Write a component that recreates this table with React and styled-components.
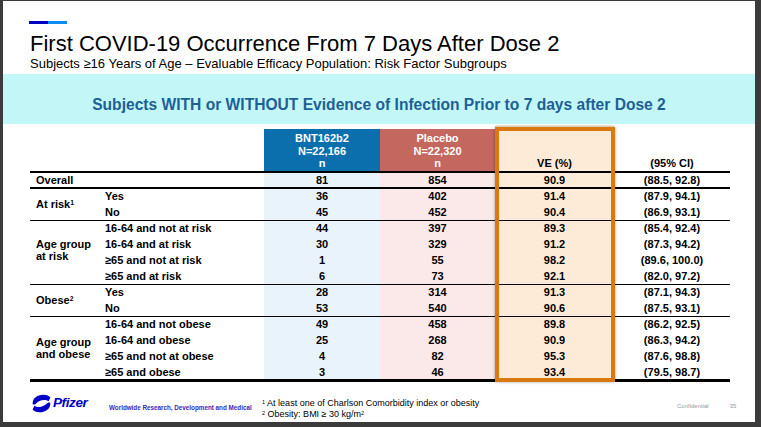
import React from 'react';
import styled, { createGlobalStyle } from 'styled-components';

const COLS = '75px 159px 116px 115px 119px 116px';

const groups = [
  {
    line: 2,
    title: 'Overall',
    wide: true,
    rows: [['', '81', '854', '90.9', '(88.5, 92.8)']],
  },
  {
    line: 2,
    title: 'At risk',
    sup: '1',
    rows: [
      ['Yes', '36', '402', '91.4', '(87.9, 94.1)'],
      ['No', '45', '452', '90.4', '(86.9, 93.1)'],
    ],
  },
  {
    line: 1,
    title: ['Age group', 'at risk'],
    lift: 4,
    rows: [
      ['16-64 and not at risk', '44', '397', '89.3', '(85.4, 92.4)'],
      ['16-64 and at risk', '30', '329', '91.2', '(87.3, 94.2)'],
      ['≥65 and not at risk', '1', '55', '98.2', '(89.6, 100.0)'],
      ['≥65 and at risk', '6', '73', '92.1', '(82.0, 97.2)'],
    ],
  },
  {
    line: 1,
    title: 'Obese',
    sup: '2',
    rows: [
      ['Yes', '28', '314', '91.3', '(87.1, 94.3)'],
      ['No', '53', '540', '90.6', '(87.5, 93.1)'],
    ],
  },
  {
    line: 1,
    title: ['Age group', 'and obese'],
    rows: [
      ['16-64 and not obese', '49', '458', '89.8', '(86.2, 92.5)'],
      ['16-64 and obese', '25', '268', '90.9', '(86.3, 94.2)'],
      ['≥65 and not at obese', '4', '82', '95.3', '(87.6, 98.8)'],
      ['≥65 and obese', '3', '46', '93.4', '(79.5, 98.7)'],
    ],
  },
];

const tones = ['blue', 'pink', 'orange', 'none'];

const fills = {
  blue: '#e9f3fb',
  pink: '#fbe9e9',
  orange: '#fdebd8',
  none: 'transparent',
};

function PfizerMark() {
  return (
    <svg width='21' height='21' viewBox='0 0 21 21'>
      <g fill='#0000c8'>
        <path d='M1.8 11.5 C0.8 5.6 6.5 1.6 12.6 1.8 C15.8 1.9 18.2 3 19.4 4.6 L17.6 8.2 C14.2 6 8.2 6.6 4 11.4 Z' />
        <path d='M19.2 9.4 C20.2 15.4 14.5 19.4 8.4 19.2 C5.2 19.1 2.8 18 1.6 16.4 L3.4 12.8 C6.8 15 12.8 14.4 17 9.6 Z' />
      </g>
    </svg>
  );
}

export default function App() {
  return (
    <>
      <GlobalStyle />
      <Slide>
        <Accent />
        <Title>First COVID-19 Occurrence From 7 Days After Dose 2</Title>
        <Subtitle>
          Subjects ≥16 Years of Age – Evaluable Efficacy Population: Risk Factor Subgroups
        </Subtitle>
        <Band>Subjects WITH or WITHOUT Evidence of Infection Prior to 7 days after Dose 2</Band>

        <Table>
          <HeadRow>
            <span />
            <span />
            <ArmHead $bg='#0b6fae'>
              BNT162b2
              <br />
              N=22,166
              <br />n
            </ArmHead>
            <ArmHead $bg='#c4675f'>
              Placebo
              <br />
              N=22,320
              <br />n
            </ArmHead>
            <StatHead $tone='orange'>VE (%)</StatHead>
            <StatHead $tone='none'>(95% CI)</StatHead>
          </HeadRow>

          {groups.map((g, gi) => (
            <Group key={gi} $line={g.line}>
              <GroupLabel $rows={g.rows.length} $wide={g.wide} $lift={g.lift || 0}>
                {Array.isArray(g.title)
                  ? g.title.map(t => <div key={t}>{t}</div>)
                  : g.title}
                {g.sup && <Sup>{g.sup}</Sup>}
              </GroupLabel>
              {g.rows.map((r, ri) => (
                <React.Fragment key={ri}>
                  {!g.wide && <SubLabel>{r[0]}</SubLabel>}
                  {r.slice(1).map((v, vi) => (
                    <Cell key={vi} $tone={tones[vi]}>
                      {v}
                    </Cell>
                  ))}
                </React.Fragment>
              ))}
            </Group>
          ))}
          <BottomRule />

          <Highlight />
        </Table>

        <Footer>
          <Logo>
            <PfizerMark />
            <Wordmark>Pfizer</Wordmark>
          </Logo>
          <Division>Worldwide Research, Development and Medical</Division>
          <Notes>
            <div>
              <Sup>1</Sup> At least one of Charlson Comorbidity index or obesity
            </div>
            <div>
              <Sup>2</Sup> Obesity: BMI ≥ 30 kg/m<Sup>2</Sup>
            </div>
          </Notes>
          <Confidential>
            Confidential<PageNo>35</PageNo>
          </Confidential>
        </Footer>
      </Slide>
    </>
  );
}

const GlobalStyle = createGlobalStyle`
  html, body {
    margin: 0;
    padding: 0;
    background: #3b3b3b;
  }

  body {
    width: 761px;
    height: 427px;
    overflow: hidden;
    font-family: 'Liberation Sans', Arial, sans-serif;
    color: #000;
  }
`;

const Slide = styled.div`
  display: flex;
  flex-direction: column;
  width: 752px;
  height: 421px;
  margin: 1px 0 0 3px;
  background: #fff;
  overflow: hidden;
`;

const Accent = styled.div`
  width: 38px;
  height: 3px;
  margin: 20px 0 0 26px;
  background: linear-gradient(to right, #0000c4 50%, #0a8cf0 50%);
`;

const Title = styled.h1`
  margin: 8px 0 0 27px;
  font-size: 22px;
  line-height: 24px;
  font-weight: normal;
`;

const Subtitle = styled.div`
  margin: 1px 0 0 27px;
  font-size: 13px;
  line-height: 14px;
`;

const Band = styled.div`
  height: 50px;
  margin-top: 3px;
  padding-top: 22px;
  box-sizing: border-box;
  background: #c3f7f7;
  color: #1d6096;
  font-size: 15.6px;
  line-height: 18px;
  font-weight: bold;
  text-align: center;
`;

const Table = styled.div`
  position: relative;
  width: 700px;
  margin: 1px 0 0 27px;
  font-size: 11px;
  font-weight: bold;
`;

const HeadRow = styled.div`
  display: grid;
  grid-template-columns: ${COLS};
  height: 47px;
`;

const ArmHead = styled.div`
  align-self: end;
  height: 43px;
  box-sizing: border-box;
  padding-top: 3px;
  background: ${p => p.$bg};
  color: #fff;
  line-height: 12.5px;
  text-align: center;
`;

const StatHead = styled.div`
  display: flex;
  align-items: flex-end;
  justify-content: center;
  padding-bottom: 2px;
  background: ${p => fills[p.$tone]};
  line-height: 13px;
`;

const Group = styled.div`
  position: relative;
  display: grid;
  grid-template-columns: ${COLS};
  grid-auto-rows: 16px;
  line-height: 16px;

  &::before {
    content: '';
    position: absolute;
    left: 0;
    right: 0;
    top: ${p => -p.$line / 2}px;
    height: ${p => p.$line}px;
    background: #000;
    z-index: 1;
  }
`;

const GroupLabel = styled.div`
  grid-column: 1 / span ${p => (p.$wide ? 2 : 1)};
  grid-row: span ${p => p.$rows};
  align-self: center;
  padding-left: 6px;
  padding-bottom: ${p => p.$lift}px;
  line-height: ${p => (p.$rows > 1 ? '12.5px' : '16px')};
`;

const SubLabel = styled.div`
  grid-column: 2;
`;

const Cell = styled.div`
  background: ${p => fills[p.$tone]};
  text-align: center;
`;

const BottomRule = styled.div`
  position: relative;
  height: 0;

  &::before {
    content: '';
    position: absolute;
    left: 0;
    right: 0;
    top: -1px;
    height: 2.5px;
    background: #000;
    z-index: 1;
  }
`;

const Highlight = styled.div`
  position: absolute;
  left: 465px;
  top: 2px;
  width: 120px;
  height: 255px;
  box-sizing: border-box;
  border: 4px solid #da790f;
  box-shadow: 0 0 3px rgba(0, 0, 0, 0.35);
  z-index: 2;
  pointer-events: none;
`;

const Sup = styled.sup`
  font-size: 0.62em;
  line-height: 0;
  vertical-align: 0.45em;
`;

const Footer = styled.div`
  display: flex;
  align-items: flex-start;
  height: 28px;
  margin: 13px 0 0 28px;
`;

const Logo = styled.div`
  display: flex;
  align-items: flex-start;
  width: 78px;
`;

const Wordmark = styled.span`
  margin: 3px 0 0 1px;
  color: #0000c8;
  font-size: 13.5px;
  line-height: 14px;
  font-style: italic;
  font-weight: bold;
  letter-spacing: -0.4px;
`;

const Division = styled.div`
  width: 153px;
  margin-top: 11px;
  color: #3a27b8;
  font-size: 6.3px;
  line-height: 8px;
  font-weight: bold;
`;

const Notes = styled.div`
  width: 415px;
  margin-top: 5px;
  font-size: 9px;
  line-height: 11px;
`;

const Confidential = styled.div`
  margin-top: 9px;
  color: #999;
  font-size: 6px;
  line-height: 8px;
`;

const PageNo = styled.span`
  margin-left: 21px;
`;
